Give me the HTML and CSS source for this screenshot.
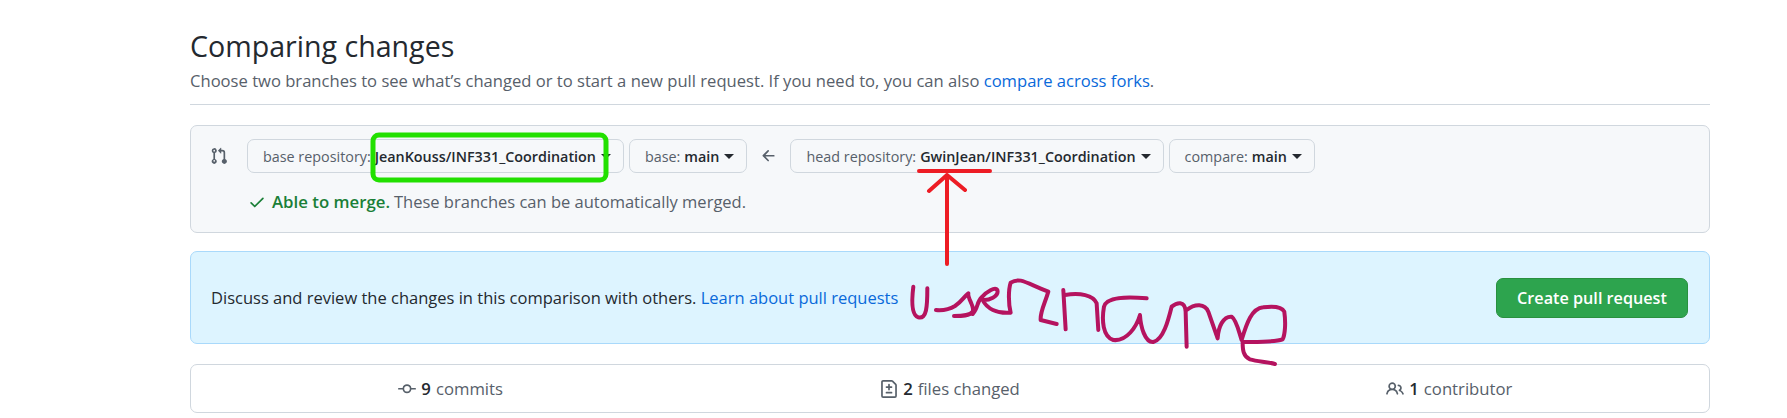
FILE: index.html
```html
<!DOCTYPE html>
<html lang="en">
<head>
<meta charset="utf-8">
<title>Comparing changes</title>
<link rel="stylesheet" href="styles.css">
</head>
<body>
<main class="page">
  <header class="subhead">
    <h1 class="title">Comparing changes</h1>
    <p class="lead">Choose two branches to see what’s changed or to start a new pull request. If you need to, you can also <a class="link" href="#">compare across forks</a>.</p>
  </header>

  <section class="range">
    <svg class="icon range-icon" viewBox="0 0 16 16"><path d="M9.573.677A.25.25 0 0110 .854V2.5h1A2.5 2.5 0 0113.5 5v5.628a2.251 2.251 0 11-1.5 0V5a1 1 0 00-1-1h-1v1.646a.25.25 0 01-.427.177L7.177 3.427a.25.25 0 010-.354l2.396-2.396zM3.75 2.5a.75.75 0 100 1.5.75.75 0 000-1.5zm-2.25.75a2.25 2.25 0 113 2.122v5.256a2.251 2.251 0 11-1.5 0V5.372A2.25 2.25 0 011.5 3.25zM11 12.25a.75.75 0 111.5 0 .75.75 0 01-1.5 0zm-7.25-.75a.75.75 0 100 1.5.75.75 0 000-1.5z"/></svg>
    <div class="range-body">
      <div class="range-row">
        <button class="select"><span class="muted">base repository:</span><b class="val">JeanKouss/INF331_Coordination</b><i class="caret"></i></button>
        <button class="select"><span class="muted">base:</span><b class="val">main</b><i class="caret"></i></button>
        <svg class="icon arrow" viewBox="0 0 16 16"><path d="M7.78 12.53a.75.75 0 01-1.06 0L2.47 8.28a.75.75 0 010-1.06l4.25-4.25a.75.75 0 011.06 1.06L4.81 7h7.44a.75.75 0 010 1.5H4.81l2.97 2.97a.75.75 0 010 1.06z"/></svg>
        <button class="select"><span class="muted">head repository:</span><b class="val">GwinJean/INF331_Coordination</b><i class="caret"></i></button>
        <button class="select"><span class="muted">compare:</span><b class="val">main</b><i class="caret"></i></button>
      </div>
      <div class="merge">
        <svg class="icon check" viewBox="0 0 16 16"><path d="M13.78 4.22a.75.75 0 010 1.06l-7.25 7.25a.75.75 0 01-1.06 0L2.22 9.28a.75.75 0 011.06-1.06L6 10.94l6.72-6.72a.75.75 0 011.06 0z"/></svg>
        <b class="merge-ok">Able to merge.</b><span class="merge-text">These branches can be automatically merged.</span>
      </div>
    </div>
  </section>

  <section class="discuss">
    <p class="discuss-text">Discuss and review the changes in this comparison with others. <a class="link" href="#">Learn about pull requests</a></p>
    <button class="create">Create pull request</button>
  </section>

  <section class="stats">
    <div class="stat"><svg class="icon stat-icon" viewBox="0 0 16 16"><path fill-rule="evenodd" d="M10.5 7.75a2.5 2.5 0 11-5 0 2.5 2.5 0 015 0zm1.43.75a4.002 4.002 0 01-7.86 0H.75a.75.75 0 110-1.5h3.32a4.001 4.001 0 017.86 0h3.32a.75.75 0 110 1.5h-3.32z"/></svg><b class="num">9</b><span class="stat-label">commits</span></div>
    <div class="stat"><svg class="icon stat-icon" viewBox="0 0 16 16"><path fill-rule="evenodd" d="M2.75 1.5a.25.25 0 00-.25.25v12.5c0 .138.112.25.25.25h10.5a.25.25 0 00.25-.25V4.664a.25.25 0 00-.073-.177l-2.914-2.914a.25.25 0 00-.177-.073H2.75zM1 1.75C1 .784 1.784 0 2.75 0h7.586c.464 0 .909.184 1.237.513l2.914 2.914c.329.328.513.773.513 1.237v9.586A1.75 1.75 0 0113.25 16H2.75A1.75 1.75 0 011 14.25V1.75zm7 1.5a.75.75 0 01.75.75v1.5h1.5a.75.75 0 010 1.5h-1.5v1.5a.75.75 0 01-1.5 0V7h-1.5a.75.75 0 010-1.5h1.5V4A.75.75 0 018 3.25zm-3 8a.75.75 0 01.75-.75h4.5a.75.75 0 010 1.5h-4.5a.75.75 0 01-.75-.75z"/></svg><b class="num">2</b><span class="stat-label">files changed</span></div>
    <div class="stat"><svg class="icon stat-icon" viewBox="0 0 16 16"><path fill-rule="evenodd" d="M5.5 3.5a2 2 0 100 4 2 2 0 000-4zM2 5.5a3.5 3.5 0 115.898 2.549 5.507 5.507 0 013.034 4.084.75.75 0 11-1.482.235 4.001 4.001 0 00-7.9 0 .75.75 0 01-1.482-.236A5.507 5.507 0 013.102 8.05 3.49 3.49 0 012 5.5zM11 4a.75.75 0 100 1.5 1.5 1.5 0 01.666 2.844.75.75 0 00-.416.672v.352a.75.75 0 00.574.73c1.2.289 2.162 1.2 2.522 2.372a.75.75 0 101.434-.44 5.01 5.01 0 00-2.56-3.012A3 3 0 0011 4z"/></svg><b class="num">1</b><span class="stat-label">contributor</span></div>
  </section>
</main>

<svg class="ink" viewBox="0 0 1787 418" aria-hidden="true">
  <rect class="ink-green" x="373" y="135" width="233" height="45" rx="6"/>
  <path class="ink-red" d="M919 171H990M947 264V175M929 191L947 175L965 190"/>
  <g transform="translate(880 240) scale(.3333)">
    <path class="ink-purple" d="M100 140C95 180 93 225 115 232C140 238 142 200 142 145"/>
    <path class="ink-purple" d="M168 210C190 212 205 210 225 198C245 185 252 170 265 160C262 175 285 200 278 215C270 228 245 228 222 228M278 222C295 205 290 185 305 172C320 155 345 140 352 150C358 170 325 182 308 180C320 205 350 222 392 218C385 190 385 150 392 128C420 110 440 130 505 155C495 190 480 215 482 240L530 252"/>
    <path class="ink-purple" d="M550 150L557 268M555 165C600 158 640 165 650 190L655 270"/>
    <path class="ink-purple" d="M800 175C740 170 680 170 672 200C665 240 668 290 700 300C740 305 770 260 780 225C782 260 795 308 820 306C850 300 865 240 875 200C890 188 915 180 917 215L920 320M920 210C945 190 975 190 985 215L1013 295C1015 260 1030 228 1055 230C1070 240 1078 280 1085 300C1100 250 1115 205 1150 202C1180 198 1205 200 1213 215C1218 250 1215 285 1208 298C1180 308 1120 305 1088 306C1088 330 1090 350 1110 358C1135 365 1160 365 1185 372"/>
  </g>
</svg>
</body>
</html>
```
FILE: styles.css
```css
* { box-sizing: border-box; }
html, body { margin: 0; height: 418px; overflow: hidden; background: #fff; }
body { font-family: "Open Sans", "Noto Sans", sans-serif; color: #24292f; position: relative; }
.page { width: 1520px; margin-left: 190px; padding-top: 25px; }
.subhead { height: 80px; border-bottom: 1px solid #d0d7de; }
.title { margin: 0; font-size: 28.6px; font-weight: 400; line-height: 42px; }
.lead { margin: 2px 0 0; font-size: 16.6px; line-height: 24px; color: #57606a; }
.link { color: #0969da; text-decoration: none; }
.icon { display: block; fill: currentColor; flex: none; }

.range { margin-top: 20px; height: 108px; display: flex; background: #f6f8fa; border: 1px solid #d0d7de; border-radius: 7px; padding: 13px 0 0 19px; }
.range-icon { width: 18px; height: 18px; margin-top: 8px; color: #57606a; }
.range-body { margin-left: 19px; }
.range-row { display: flex; align-items: center; gap: 5px; }
.select { height: 34px; display: flex; align-items: center; white-space: pre; background: #f6f8fa; border: 1px solid #d0d7de; border-radius: 7px; padding: 0 12px 0 15px; font: 14.35px "Open Sans", sans-serif; color: #24292f; }
.muted { color: #57606a; }
.val { font-weight: 600; margin-left: 4px; }
.caret { width: 0; height: 0; margin-left: 5px; border: 5px solid transparent; border-top-color: #24292f; border-bottom: 0; }
.arrow { width: 18px; height: 18px; color: #57606a; margin: 0 7.5px; }
.merge { display: flex; align-items: center; white-space: pre; margin-top: 17px; font-size: 16.5px; line-height: 24px; color: #57606a; }
.check { width: 18px; height: 18px; color: #1a7f37; margin: 0 6px 0 1px; }
.merge-ok { color: #1a7f37; font-weight: 600; font-size: 16.8px; }
.merge-text { margin-left: 4px; }

.discuss { margin-top: 18px; height: 93px; display: flex; align-items: center; justify-content: space-between; background: #ddf4ff; border: 1px solid #a9d9fb; border-radius: 7px; padding: 0 21px 0 20px; }
.discuss-text { margin: 0; font-size: 16.5px; color: #24292f; }
.create { width: 192px; height: 40px; background: #2da44e; border: 1px solid #29903f; border-radius: 7px; color: #fff; font: 600 16.2px "Open Sans", sans-serif; }

.stats { margin-top: 20px; height: 49px; display: grid; grid-template-columns: repeat(3, 1fr); align-items: center; border: 1px solid #d0d7de; border-radius: 7px; padding: 0 10px; }
.stat { display: flex; align-items: center; justify-content: center; white-space: pre; font-size: 16.7px; color: #57606a; }
.stat-icon { width: 18px; height: 18px; margin-right: 5px; }
.num { color: #24292f; font-weight: 600; }
.stat-label { margin-left: 5px; }

.ink { position: absolute; left: 0; top: 0; width: 1787px; height: 418px; pointer-events: none; }
.ink-green { fill: none; stroke: #22e000; stroke-width: 5; }
.ink-red { fill: none; stroke: #ed1c24; stroke-width: 4; stroke-linecap: round; stroke-linejoin: round; }
.ink-purple { fill: none; stroke: #b5135f; stroke-width: 12; stroke-linecap: round; stroke-linejoin: round; }
```
